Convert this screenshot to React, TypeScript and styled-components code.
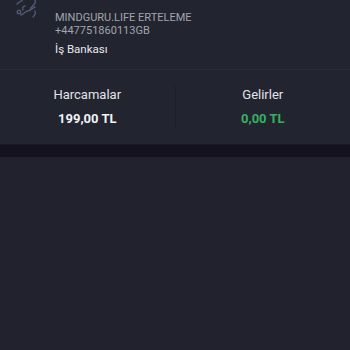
import { createGlobalStyle } from "styled-components";
import styled from "styled-components";

const GlobalStyle = createGlobalStyle`
  html, body {
    margin: 0;
    padding: 0;
    background: #21222d;
    font-family: Roboto, "Noto Sans", sans-serif;
  }
`;

const Screen = styled.div`
  width: 350px;
  height: 350px;
  overflow: hidden;
  background: #21222d;
`;

const Card = styled.div`
  background: #222430;
  border-bottom: 1px solid #1a1a26;
`;

const Detail = styled.div`
  position: relative;
  display: flex;
  padding: 11px 16px 13px 55px;
  border-bottom: 1px solid #2a2c38;
`;

const Logo = styled.svg`
  position: absolute;
  left: 12px;
  top: -10px;
  opacity: 0.45;
`;

const Lines = styled.div`
  display: flex;
  flex-direction: column;
`;

const Sub = styled.div`
  color: #a3a4ad;
  font-size: 11px;
  line-height: 13px;
`;

const Bank = styled.div`
  color: #e8e8ec;
  font-size: 11.5px;
  line-height: 14px;
  margin-top: 5px;
`;

const Totals = styled.div`
  display: grid;
  grid-template-columns: 1fr 1px 1fr;
  align-items: center;
  padding: 16px 0 16px;
`;

const Total = styled.div`
  display: flex;
  flex-direction: column;
  align-items: center;
  gap: 8px;
`;

const Label = styled.div`
  color: #e2e3e8;
  font-size: 13px;
  line-height: 16px;
`;

const Amount = styled.div<{ $green?: boolean }>`
  color: ${(p) => (p.$green ? "#35b060" : "#f2f2f4")};
  font-size: 13px;
  font-weight: 700;
  line-height: 16px;
`;

const VDivider = styled.div`
  width: 1px;
  height: 42px;
  background: #1c1f27;
`;

const Band = styled.div`
  height: 12px;
  background: #13121e;
`;

export default function App() {
  return (
    <>
      <GlobalStyle />
      <Screen>
        <Card>
          <Detail>
            <Logo width="30" height="28" viewBox="0 0 30 28" fill="none" stroke="#8e96c4" strokeWidth="1.4" strokeLinecap="round">
              <path d="M5 14c2-3 5-2 6-5s4-4 7-2" />
              <path d="M18 7c4 0 6 3 5 6s-4 3-5 7" />
              <path d="M9 25c3-1 4-4 7-4s4-3 7-4" />
              <path d="M13 16c-2 0-3 2-2 4" />
              <circle cx="7" cy="22" r="1.8" />
              <path d="M23 21c1 2 0 4-2 6" />
            </Logo>
            <Lines>
              <Sub>MINDGURU.LIFE ERTELEME</Sub>
              <Sub>+447751860113GB</Sub>
              <Bank>İş Bankası</Bank>
            </Lines>
          </Detail>
          <Totals>
            <Total>
              <Label>Harcamalar</Label>
              <Amount>199,00 TL</Amount>
            </Total>
            <VDivider />
            <Total>
              <Label>Gelirler</Label>
              <Amount $green>0,00 TL</Amount>
            </Total>
          </Totals>
        </Card>
        <Band />
      </Screen>
    </>
  );
}
